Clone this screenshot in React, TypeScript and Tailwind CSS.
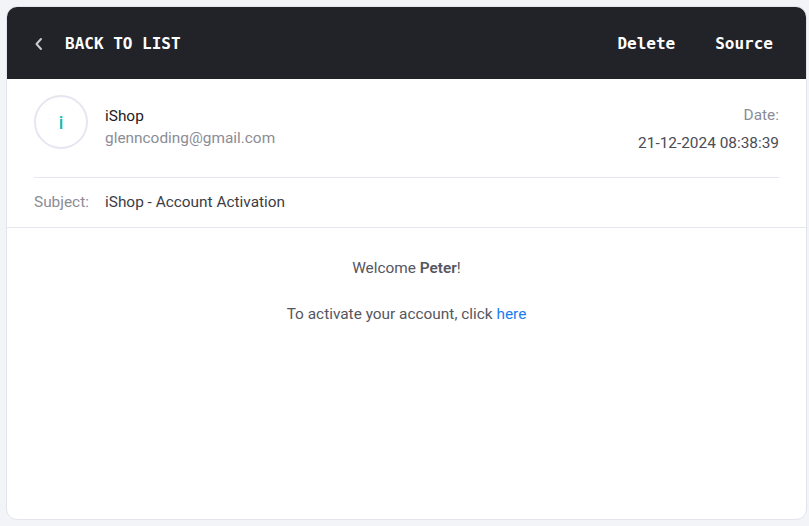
import React from "react";

const mono = { fontFamily: '"DejaVu Sans Mono", monospace' };

const ChevronLeft: React.FC = () => (
  <svg width="10" height="16" viewBox="0 0 10 16" fill="none">
    <path d="M7 3L2.5 8L7 13" stroke="#c9cad1" strokeWidth="2" strokeLinecap="round" strokeLinejoin="round" />
  </svg>
);

const App: React.FC = () => {
  return (
    <div className="min-h-[526px] bg-[#f3f4f7] pt-[6px] pb-[6px] pl-[6px] pr-[2px] font-['Roboto',sans-serif]">
      <div className="h-[514px] bg-white rounded-[11px] border border-[#e4e4ee] overflow-hidden flex flex-col">
        {/* header bar */}
        <div className="h-[72px] bg-[#212329] flex items-center justify-between pl-[27px] pr-[33px] pt-[1px] shrink-0">
          <button className="flex items-center gap-[21px] text-white font-bold text-[16px]" style={mono}>
            <ChevronLeft />
            <span>BACK TO LIST</span>
          </button>
          <div className="flex items-center gap-[40px] text-white font-bold text-[16px]" style={mono}>
            <button>Delete</button>
            <button>Source</button>
          </div>
        </div>

        {/* sender */}
        <div className="px-[27px]">
          <div className="flex justify-between pt-[16px] pb-[23px] border-b border-[#e6e6ee]">
            <div className="flex items-start gap-[17px]">
              <div className="w-[54px] h-[54px] rounded-full border-2 border-[#e6e6f0] flex items-center justify-center text-[#16bba5] text-[18px] font-medium">
                i
              </div>
              <div className="pt-[10px] text-[15.4px] leading-[22px]">
                <p className="text-[#1f2024]">iShop</p>
                <p className="text-[#8b8c96]">glenncoding@gmail.com</p>
              </div>
            </div>
            <div className="pt-[9px] text-right text-[15.4px] leading-[22px]">
              <p className="text-[#8b8c96]">Date:</p>
              <p className="mt-[6px] text-[#4b4c55]">21-12-2024 08:38:39</p>
            </div>
          </div>
          <div className="h-[49px] flex items-center text-[15.4px]">
            <span className="w-[71px] text-[#8b8c96]">Subject:</span>
            <span className="text-[#3c3d45]">iShop - Account Activation</span>
          </div>
        </div>

        {/* message body */}
        <div className="border-t border-[#e6e6ee] pt-[29px] text-center text-[15.4px] leading-[22px] text-[#55565e]">
          <p>
            Welcome <strong className="font-semibold">Peter</strong>!
          </p>
          <p className="mt-[24px]">
            To activate your account, click <a href="#" className="text-[#1a7cf0]">here</a>
          </p>
        </div>
      </div>
    </div>
  );
};

export default App;
